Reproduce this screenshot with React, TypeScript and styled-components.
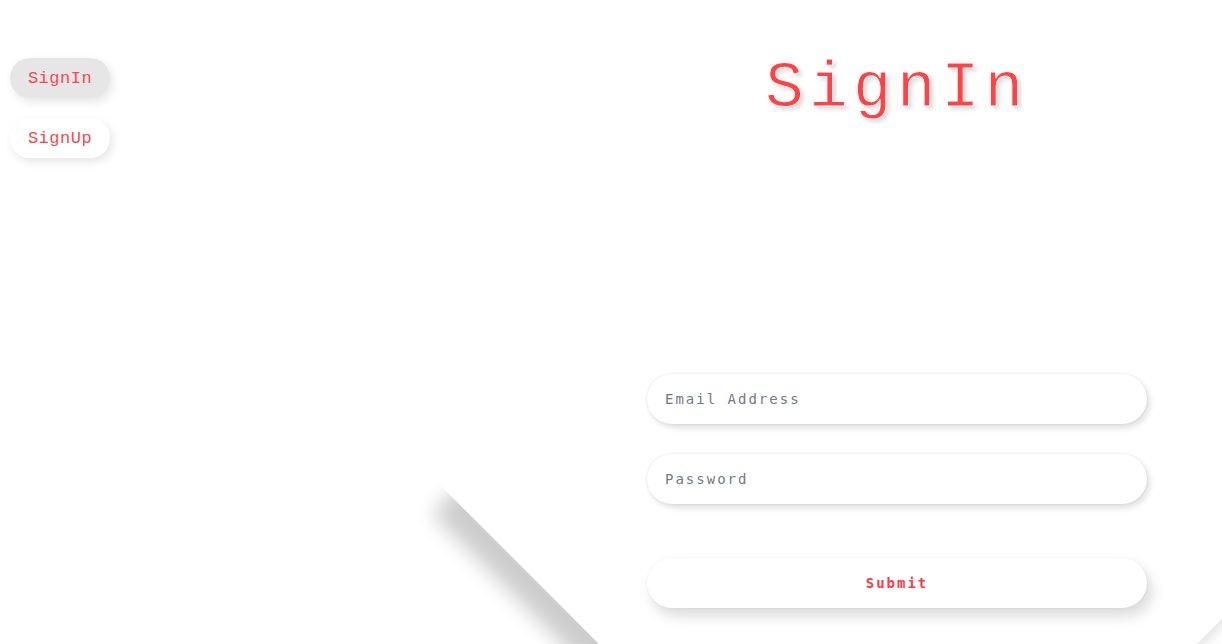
import React from "react";
import styled, { createGlobalStyle } from "styled-components";

const Global = createGlobalStyle`
  html, body { margin: 0; padding: 0; background: #ffffff; }
  * { box-sizing: border-box; }
`;

const Page = styled.div`
  position: relative;
  width: 100vw;
  height: 100vh;
  overflow: hidden;
  display: flex;
  justify-content: space-between;
  background: #ffffff;
  font-family: "Liberation Mono", "DejaVu Sans Mono", monospace;
`;

const Diamond = styled.div`
  position: absolute;
  left: 572px;
  top: 156px;
  width: 652px;
  height: 652px;
  background: #ffffff;
  transform: rotate(45deg);
  box-shadow: 9px 36px 20px -10px rgba(0, 0, 0, 0.2);
  z-index: 0;
`;

const Nav = styled.nav`
  position: relative;
  z-index: 1;
  display: flex;
  flex-direction: column;
  gap: 20px;
  padding: 58px 0 0 10px;
`;

const NavButton = styled.button<{ $active?: boolean }>`
  width: 100px;
  height: 40px;
  border: none;
  border-radius: 20px;
  background: ${(p) => (p.$active ? "#e6e6e6" : "#ffffff")};
  box-shadow: 3px 4px 10px rgba(0, 0, 0, 0.1);
  color: #fb4656;
  font-family: "Liberation Mono", "DejaVu Sans Mono", monospace;
  font-size: 17px;
  letter-spacing: 0.5px;
  padding: 0;
  cursor: pointer;
`;

const Main = styled.main`
  position: relative;
  z-index: 1;
  width: 500px;
  margin-right: 75px;
  display: flex;
  flex-direction: column;
  align-items: stretch;
`;

const Title = styled.h1`
  margin: 51px 0 0;
  text-align: center;
  font-family: "Liberation Mono", "DejaVu Sans Mono", monospace;
  font-weight: 400;
  font-size: 64px;
  line-height: 76px;
  letter-spacing: 5.5px;
  padding-left: 0;
  color: #ff4245;
  -webkit-text-stroke: 0.8px #ffffff;
  paint-order: fill;
  text-shadow: 3px 3px 4px rgba(0, 0, 0, 0.16);
`;

const Form = styled.form`
  display: flex;
  flex-direction: column;
  margin-top: 247px;
`;

const Input = styled.input`
  width: 500px;
  height: 50px;
  border: none;
  outline: none;
  border-radius: 25px;
  background: #ffffff;
  padding: 0 18px;
  margin-bottom: 30px;
  box-shadow: 0 0 3px rgba(0, 0, 0, 0.1), 3px 4px 6px rgba(0, 0, 0, 0.12);
  font-family: "DejaVu Sans Mono", monospace;
  font-size: 14px;
  letter-spacing: 2px;
  color: #444;
  &::placeholder {
    color: #737983;
  }
`;

const Submit = styled.button`
  width: 500px;
  height: 50px;
  margin-top: 24px;
  border: none;
  border-radius: 25px;
  background: #ffffff;
  box-shadow: 0 0 3px rgba(0, 0, 0, 0.05), 5px 8px 14px rgba(0, 0, 0, 0.15);
  color: #ff3a46;
  font-family: "DejaVu Sans Mono", monospace;
  font-weight: 700;
  font-size: 14px;
  letter-spacing: 2px;
  cursor: pointer;
`;

export default function App() {
  return (
    <>
      <Global />
      <Page>
        <Diamond />
        <Nav>
          <NavButton $active>SignIn</NavButton>
          <NavButton>SignUp</NavButton>
        </Nav>
        <Main>
          <Title>SignIn</Title>
          <Form onSubmit={(e) => e.preventDefault()}>
            <Input type="email" placeholder="Email Address" />
            <Input type="password" placeholder="Password" />
            <Submit type="submit">Submit</Submit>
          </Form>
        </Main>
      </Page>
    </>
  );
}
